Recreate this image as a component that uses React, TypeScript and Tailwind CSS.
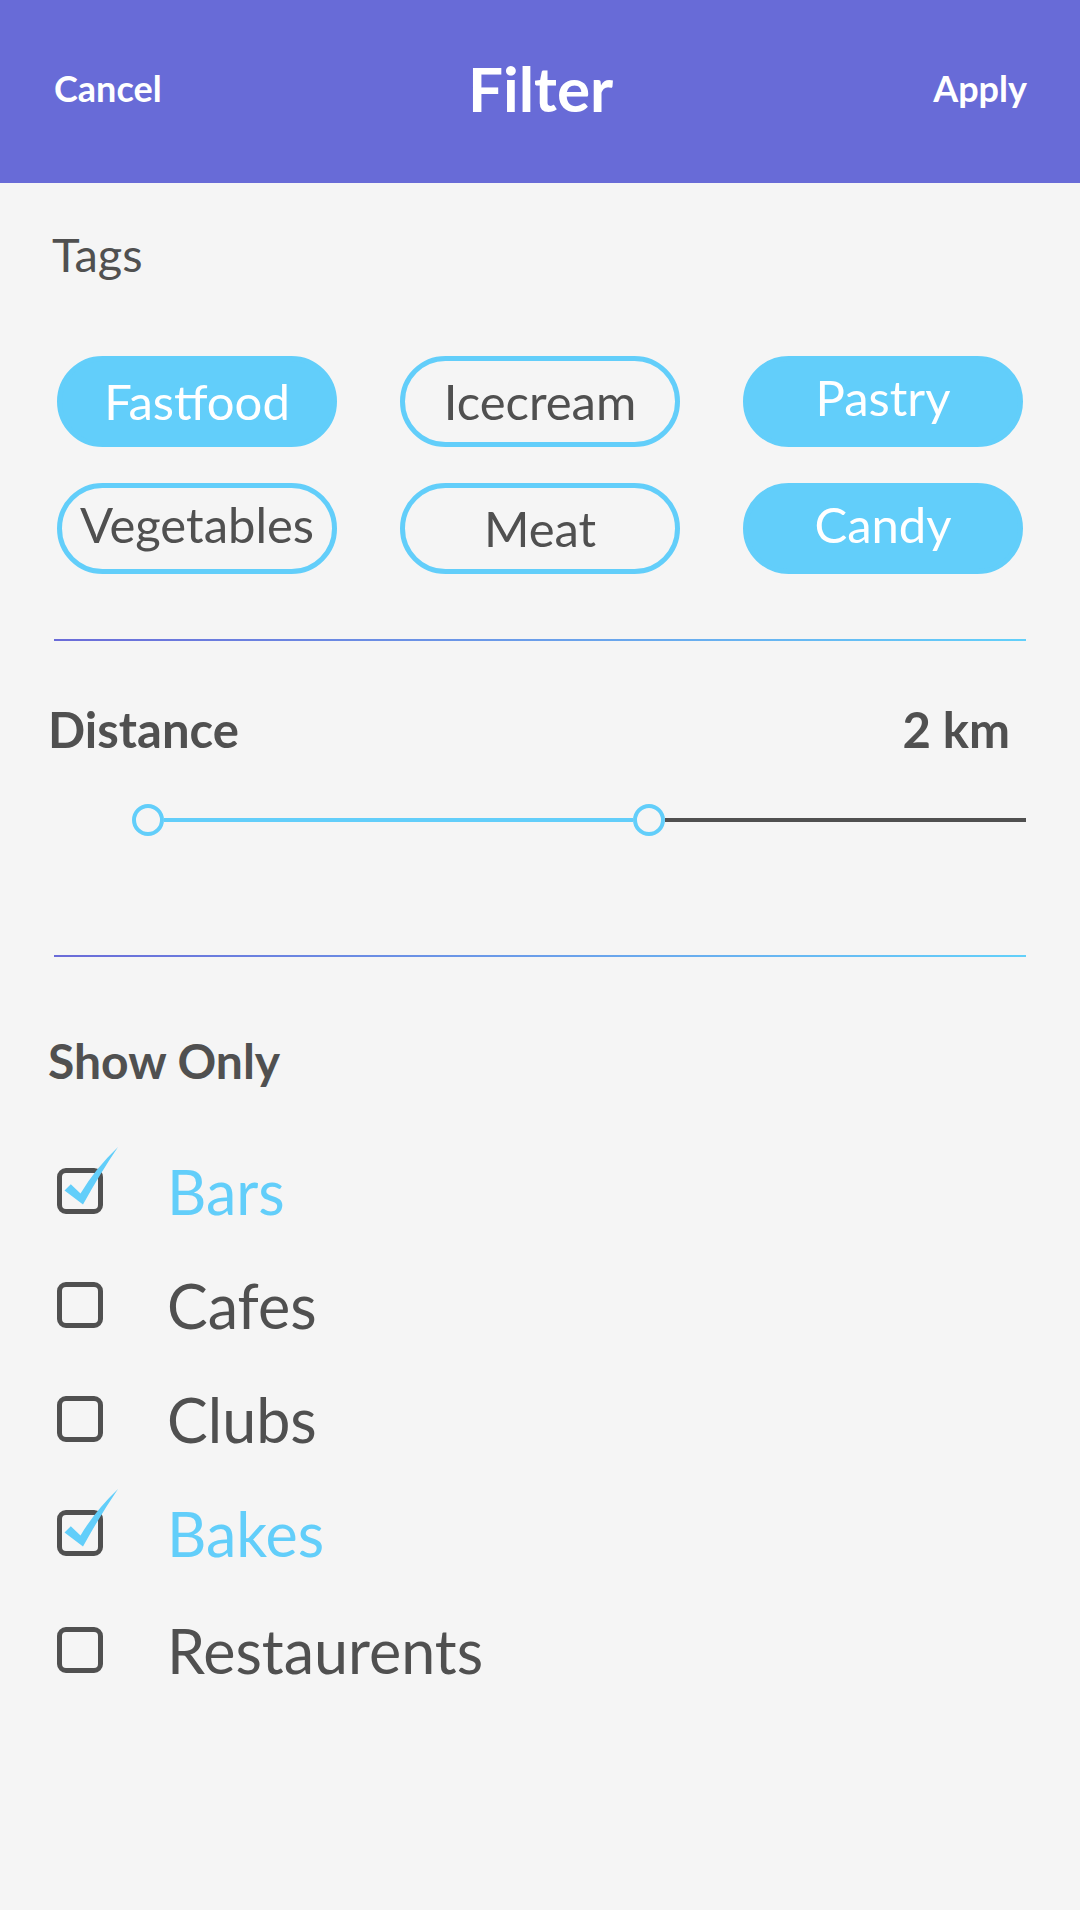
import React from "react";

const tags = [
  { label: "Fastfood", active: true, shift: "" },
  { label: "Icecream", active: false, shift: "" },
  { label: "Pastry", active: true, shift: "-translate-y-[4px]" },
  { label: "Vegetables", active: false, shift: "-translate-y-[4px]" },
  { label: "Meat", active: false, shift: "" },
  { label: "Candy", active: true, shift: "-translate-y-[4px]" },
];

const places = [
  { label: "Bars", checked: true },
  { label: "Cafes", checked: false },
  { label: "Clubs", checked: false },
  { label: "Bakes", checked: true },
  { label: "Restaurents", checked: false },
];

const Divider = () => (
  <div className="mx-[54px] h-[2px] bg-gradient-to-r from-[#6a6bd8] to-[#62d0fa]" />
);

const CheckBox = ({ checked }: { checked: boolean }) => (
  <div className="relative w-[46px] h-[46px] shrink-0 rounded-[9px] border-[5px] border-[#505050]">
    {checked && (
      <svg
        className="absolute left-[-5px] top-[-29px] overflow-visible"
        width="70"
        height="66"
        viewBox="0 -24 70 66"
      >
        <path
          d="M7.5 22.5 L13.8 16.2 L23.5 25.5 Q38 1 61 -21 Q44 4 26 36.5 Z"
          fill="#62cefa"
        />
      </svg>
    )}
  </div>
);

const App: React.FC = () => {
  return (
    <div
      className="w-[1080px] min-h-[1910px] bg-[#f5f5f5] text-[#505050]"
      style={{ fontFamily: "Lato, 'Open Sans', sans-serif" }}
    >
      <div className="h-[183px] bg-[#686bd7] flex items-center justify-between pl-[54px] pr-[53px] pb-[7px] text-white font-bold">
        <span className="text-[36px] leading-none w-[160px]">Cancel</span>
        <span className="text-[62px] leading-none">Filter</span>
        <span className="text-[36px] leading-none w-[160px] text-right">Apply</span>
      </div>

      <div className="pl-[52px] pt-[48px] text-[47px] leading-none">Tags</div>

      <div className="grid grid-cols-3 gap-x-[63px] gap-y-[36px] px-[57px] mt-[78px]">
        {tags.map((t) => (
          <div
            key={t.label}
            className={
              t.active
                ? "h-[91px] rounded-full border-[5px] border-[#62cefa] bg-[#62cefa] text-white flex items-center justify-center text-[49px] leading-none"
                : "h-[91px] rounded-full border-[5px] border-[#62cefa] flex items-center justify-center text-[49px] leading-none"
            }
          >
            <span className={t.shift}>{t.label}</span>
          </div>
        ))}
      </div>

      <div className="mt-[65px]">
        <Divider />
      </div>

      <div className="flex justify-between pl-[48px] pr-[70px] mt-[64px] text-[49px] font-bold leading-none">
        <span>Distance</span>
        <span>2 km</span>
      </div>

      <div className="flex items-center ml-[132px] mr-[54px] mt-[50px] h-[32px]">
        <div className="w-[32px] h-[32px] rounded-full border-[4px] border-[#62cefa] shrink-0" />
        <div className="w-[469px] h-[4px] bg-[#62cefa]" />
        <div className="w-[32px] h-[32px] rounded-full border-[4px] border-[#62cefa] shrink-0" />
        <div className="flex-1 h-[4px] bg-[#505050]" />
      </div>

      <div className="mt-[119px]">
        <Divider />
      </div>

      <div className="pl-[48px] mt-[80px] text-[48px] font-bold leading-none">Show Only</div>

      <div className="flex flex-col gap-[54px] pl-[57px] mt-[76px]">
        {places.map((p, i) => (
          <div
            key={p.label}
            className={i === places.length - 1 ? "flex items-center h-[60px] mt-[3px]" : "flex items-center h-[60px]"}
          >
            <CheckBox checked={p.checked} />
            <span
              className={
                p.checked
                  ? "ml-[64px] text-[61px] leading-none text-[#62cefa]"
                  : "ml-[64px] text-[61px] leading-none"
              }
            >
              {p.label}
            </span>
          </div>
        ))}
      </div>
    </div>
  );
};

export default App;
